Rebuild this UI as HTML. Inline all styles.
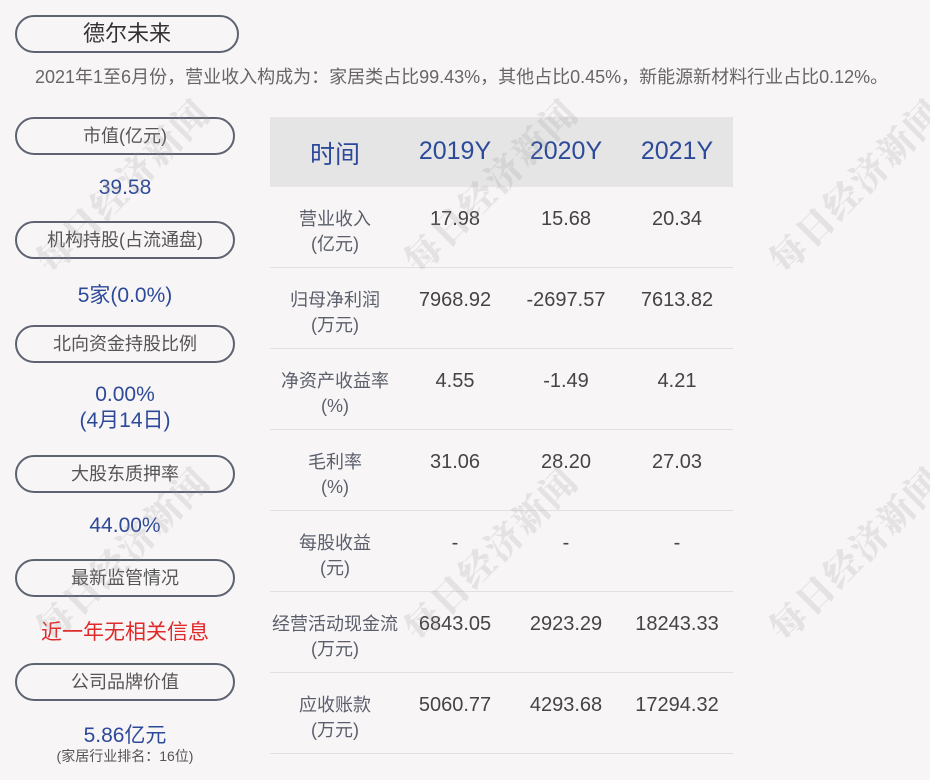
<!DOCTYPE html>
<html><head><meta charset="utf-8"><style>
*{margin:0;padding:0;box-sizing:border-box}
body{width:930px;height:780px;background:#f8f5f6;position:relative;overflow:hidden;font-family:"Liberation Sans","Noto Sans CJK SC",sans-serif}
.a{position:absolute;white-space:nowrap}
.pill{position:absolute;border:2px solid #5d6370;border-radius:20px;height:38px;text-align:center;line-height:34px;color:#555;font-size:18px}
.v{position:absolute;width:220px;left:15px;text-align:center;color:#2d4a9a;font-size:21px}
.wm{position:absolute;font-family:"Noto Serif CJK SC","Liberation Serif",serif;font-weight:900;font-size:36px;color:rgba(150,150,150,0.2);transform:translate(-50%,-50%) rotate(-45deg);white-space:nowrap;letter-spacing:2px}
.hd{position:absolute;left:270px;top:117px;width:463px;height:70px;background:#e5e5e5}
.th{position:absolute;top:137px;color:#2d4a9a;font-size:25px;text-align:center;width:120px}
.row{position:absolute;left:270px;width:463px;height:81px;border-bottom:1px solid #e3e0e1}
.lb{position:absolute;left:0;width:130px;text-align:center;color:#5a5f6b;font-size:18px;line-height:25px;top:20px}
.c{position:absolute;top:21px;width:120px;text-align:center;color:#444;font-size:20px}
</style></head><body>
<div class="pill" style="left:15px;top:15px;width:224px;height:38px;font-size:22px;color:#333">德尔未来</div>
<div class="a" style="left:35px;top:63px;font-size:18px;color:#666">2021年1至6月份，营业收入构成为：家居类占比99.43%，其他占比0.45%，新能源新材料行业占比0.12%。</div>

<div class="pill" style="left:15px;top:117px;width:220px">市值(亿元)</div>
<div class="v" style="top:176px">39.58</div>
<div class="pill" style="left:15px;top:221px;width:220px">机构持股(占流通盘)</div>
<div class="v" style="top:279px">5家(0.0%)</div>
<div class="pill" style="left:15px;top:325px;width:220px">北向资金持股比例</div>
<div class="v" style="top:382px;line-height:26px">0.00%<br>(4月14日)</div>
<div class="pill" style="left:15px;top:455px;width:220px">大股东质押率</div>
<div class="v" style="top:514px">44.00%</div>
<div class="pill" style="left:15px;top:559px;width:220px">最新监管情况</div>
<div class="v" style="top:616px;color:#e02a2a;font-size:21px">近一年无相关信息</div>
<div class="pill" style="left:15px;top:663px;width:220px">公司品牌价值</div>
<div class="v" style="top:719px">5.86亿元</div>
<div class="v" style="top:746px;font-size:14px;color:#555">(家居行业排名：16位)</div>

<div class="hd"></div>
<div class="th" style="left:275px;top:135px">时间</div>
<div class="th" style="left:395px">2019Y</div>
<div class="th" style="left:506px">2020Y</div>
<div class="th" style="left:617px">2021Y</div>

<div class="row" style="top:187px"><div class="lb">营业收入<br>(亿元)</div><div class="c" style="left:125px">17.98</div><div class="c" style="left:236px">15.68</div><div class="c" style="left:347px">20.34</div></div>
<div class="row" style="top:268px"><div class="lb">归母净利润<br>(万元)</div><div class="c" style="left:125px">7968.92</div><div class="c" style="left:236px">-2697.57</div><div class="c" style="left:347px">7613.82</div></div>
<div class="row" style="top:349px"><div class="lb">净资产收益率<br>(%)</div><div class="c" style="left:125px">4.55</div><div class="c" style="left:236px">-1.49</div><div class="c" style="left:347px">4.21</div></div>
<div class="row" style="top:430px"><div class="lb">毛利率<br>(%)</div><div class="c" style="left:125px">31.06</div><div class="c" style="left:236px">28.20</div><div class="c" style="left:347px">27.03</div></div>
<div class="row" style="top:511px"><div class="lb">每股收益<br>(元)</div><div class="c" style="left:125px">-</div><div class="c" style="left:236px">-</div><div class="c" style="left:347px">-</div></div>
<div class="row" style="top:592px"><div class="lb">经营活动现金流<br>(万元)</div><div class="c" style="left:125px">6843.05</div><div class="c" style="left:236px">2923.29</div><div class="c" style="left:347px">18243.33</div></div>
<div class="row" style="top:673px"><div class="lb">应收账款<br>(万元)</div><div class="c" style="left:125px">5060.77</div><div class="c" style="left:236px">4293.68</div><div class="c" style="left:347px">17294.32</div></div>

<div class="wm" style="left:122px;top:185px">每日经济新闻</div>
<div class="wm" style="left:490px;top:185px">每日经济新闻</div>
<div class="wm" style="left:855px;top:185px">每日经济新闻</div>
<div class="wm" style="left:122px;top:553px">每日经济新闻</div>
<div class="wm" style="left:490px;top:553px">每日经济新闻</div>
<div class="wm" style="left:855px;top:553px">每日经济新闻</div>
</body></html>
